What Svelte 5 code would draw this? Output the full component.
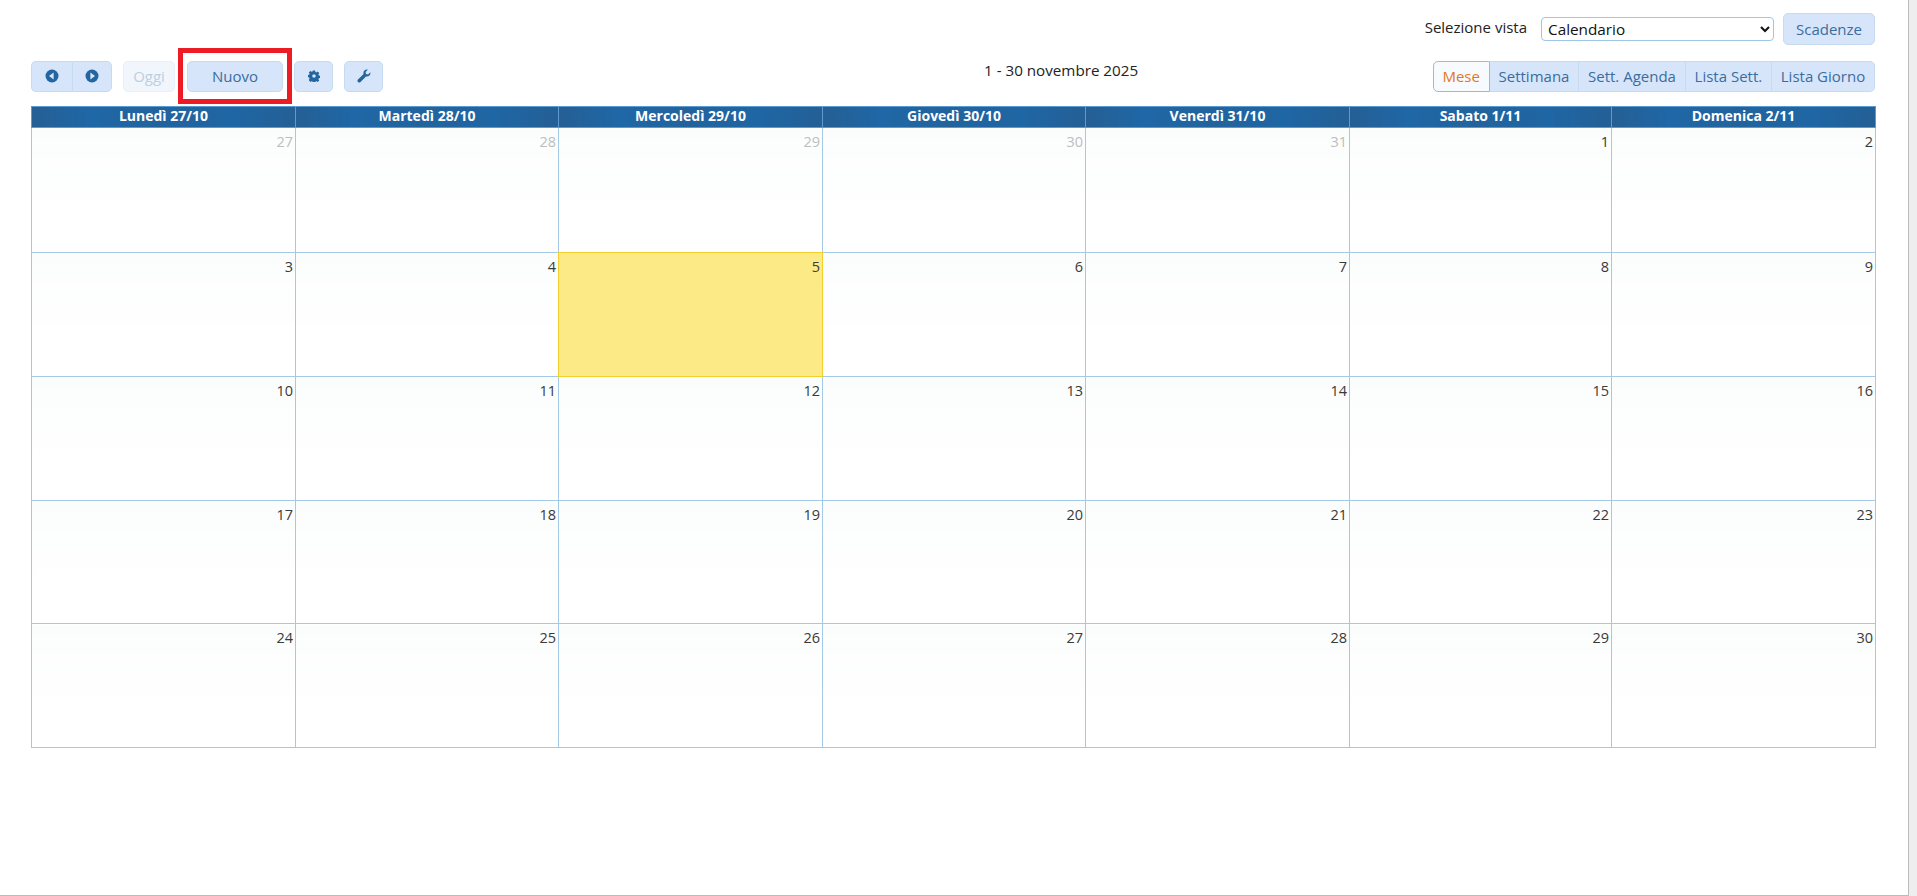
<script>
    const headers = ["Lunedì 27/10", "Martedì 28/10", "Mercoledì 29/10", "Giovedì 30/10", "Venerdì 31/10", "Sabato 1/11", "Domenica 2/11"];
    const colWidths = [264, 263, 264, 263, 264, 262, 264];
    const views = ["Mese", "Settimana", "Sett. Agenda", "Lista Sett.", "Lista Giorno"];

    // first row starts in october, the 1st is on saturday
    const weeks = [];
    let day = -4;
    for (let w = 0; w < 5; w++) {
        const row = [];
        for (let d = 0; d < 7; d++) {
            row.push(day < 1 ? { n: 31 + day, old: true } : { n: day, old: false });
            day++;
        }
        weeks.push(row);
    }
    const today = 5;
</script>

<div class="page">
    <div class="topbar">
        <span class="viewLabel">Selezione vista</span>
        <select class="viewSelect">
            <option>Calendario</option>
        </select>
        <button class="btn scadenze">Scadenze</button>
    </div>

    <div class="toolbar">
        <div class="group">
            <button class="btn nav first" aria-label="Precedente">
                <svg width="14" height="14" viewBox="0 0 14 14"><circle cx="7" cy="7" r="6.5" fill="#22659f" /><path d="M8.6 3.6v6.8L4 7z" fill="#d7e5fb" /></svg>
            </button>
            <button class="btn nav last" aria-label="Successivo">
                <svg width="14" height="14" viewBox="0 0 14 14"><circle cx="7" cy="7" r="6.5" fill="#22659f" /><path d="M5.4 3.6v6.8L10 7z" fill="#d7e5fb" /></svg>
            </button>
        </div>
        <button class="btn oggi">Oggi</button>
        <div class="highlight">
            <button class="btn nuovo">Nuovo</button>
        </div>
        <button class="btn tool gear" aria-label="Impostazioni">
            <svg width="12" height="12" viewBox="0 0 12 12"><path fill="#22659f" fill-rule="evenodd" d="M4.9.5h2.2l.3 1.5 1 .4 1.3-.8 1.5 1.5-.8 1.3.4 1 1.5.3v2.2l-1.5.3-.4 1 .8 1.3-1.5 1.5-1.3-.8-1 .4-.3 1.5H4.900l-.3-1.500-1-.4-1.300.8L.8 9.900l.8-1.300-.4-1-1.500-.3V5.100l1.500-.3.4-1-.8-1.300L2.300 1l1.300.8 1-.4zM6 4.200a1.800 1.800 0 1 0 0 3.600 1.800 1.800 0 0 0 0-3.600z" /></svg>
        </button>
        <button class="btn tool" aria-label="Strumenti">
            <svg width="14" height="14" viewBox="0 0 14 14"><path fill="#22659f" d="M13.300 3.200c.3 1.300 0 2.500-.9 3.400-.9.900-2.200 1.200-3.400.8L3.500 13c-.7.700-1.800.7-2.500 0s-.7-1.800 0-2.500L6.600 5c-.4-1.200-.1-2.500.8-3.400C8.300.700 9.500.400 10.800.700L8.600 2.900l.4 2.100 2.100.4z" /></svg>
        </button>
        <div class="title">1 - 30 novembre 2025</div>
        <div class="views">
            {#each views as v, i}
                <button class="btn view" class:active={i === 0}>{v}</button>
            {/each}
        </div>
    </div>

    <table class="calendar">
        <colgroup>
            {#each colWidths as w}
                <col style="width: {w}px" />
            {/each}
        </colgroup>
        <thead>
            <tr>
                {#each headers as h}
                    <th>{h}</th>
                {/each}
            </tr>
        </thead>
        <tbody>
            {#each weeks as week}
                <tr>
                    {#each week as cell}
                        <td class:today={!cell.old && cell.n === today}>
                            <div class="dayNum" class:old={cell.old}>{cell.n}</div>
                        </td>
                    {/each}
                </tr>
            {/each}
        </tbody>
    </table>
</div>

<style>
    :global(body) {
        background: #eeeeee;
        font-family: "Open Sans", sans-serif;
        font-size: 15px;
    }

    .page {
        box-sizing: border-box;
        width: 1909px;
        height: 896px;
        padding: 13px 33px 0 31px;
        background: #fff;
        border-right: 1px solid #bbbbbb;
        border-bottom: 1px solid #bbbbbb;
    }

    .topbar {
        display: flex;
        justify-content: flex-end;
        align-items: center;
        height: 32px;
        margin-bottom: 3px;
    }

    .viewLabel {
        color: #222;
        font-size: 15px;
        margin: -4px 14px 0 0;
    }

    .viewSelect {
        box-sizing: border-box;
        width: 233px;
        height: 24px;
        margin-right: 9px;
        padding: 0 2px;
        background: #fff;
        border: 1px solid #9fc6e4;
        border-radius: 4px;
        color: #111;
        font-family: inherit;
        font-size: 15.3px;
    }

    .btn {
        box-sizing: border-box;
        background: #d7e5fb;
        border: 1px solid #c6daf0;
        border-radius: 5px;
        color: #3b6d9c;
        font-family: inherit;
        font-size: 15px;
        padding: 0;
        cursor: pointer;
    }

    .scadenze {
        width: 92px;
        height: 32px;
    }

    .toolbar {
        display: flex;
        align-items: center;
        height: 56px;
    }

    .group {
        display: flex;
        margin-right: 11px;
    }

    .nav {
        display: flex;
        align-items: center;
        justify-content: center;
        width: 41px;
        height: 31px;
    }

    .nav.first {
        border-radius: 5px 0 0 5px;
        border-right: 0;
    }

    .nav.last {
        width: 40px;
        border-radius: 0 5px 5px 0;
    }

    .oggi {
        width: 52px;
        height: 31px;
        margin-right: 3px;
        background: #f1f6fd;
        border-color: #e8f0fa;
        color: #bccfe2;
    }

    .highlight {
        box-sizing: border-box;
        display: flex;
        align-items: center;
        justify-content: center;
        width: 114px;
        height: 56px;
        border: 5px solid #ed1c24;
    }

    .nuovo {
        width: 96px;
        height: 31px;
    }

    .tool {
        display: flex;
        align-items: center;
        justify-content: center;
        width: 39px;
        height: 31px;
        margin-left: 11px;
    }

    .gear {
        margin-left: 2px;
    }

    .title {
        flex: 1;
        margin: -13px 0 0 601px;
        color: #222;
        font-size: 15.2px;
    }

    .views {
        display: flex;
    }

    .view {
        height: 31px;
        padding: 0 8.8px;
        border-left-width: 0;
        border-radius: 0;
    }

    .view:last-child {
        border-radius: 0 5px 5px 0;
    }

    .view.active {
        border-left-width: 1px;
        border-color: #8cc0e8;
        border-radius: 5px 0 0 5px;
        background: #f8fbfe;
        color: #e0781e;
    }

    .calendar {
        width: 1844px;
        margin-top: 2px;
        border-collapse: collapse;
        table-layout: fixed;
    }

    th {
        height: 18px;
        padding: 0 0 2px;
        background: linear-gradient(90deg, #255f94, #1f67a6 22%, #22639c 48%, #1f66a4 76%, #245f95);
        border: 1px solid #5b9bd1;
        color: #fff;
        font-size: 14px;
        font-weight: 700;
        line-height: 18px;
    }

    td {
        height: 123px;
        padding: 0;
        vertical-align: top;
        background: linear-gradient(180deg, #fbfdfc, #ffffff 70%);
        border: 1px solid #a3c9e6;
    }

    tbody tr:first-child td {
        height: 124px;
    }

    tbody tr:nth-child(4) td {
        height: 122px;
    }

    td.today {
        background: #fbea85;
        /* double wins the collapsed border conflict with the neighbours */
        border: 1px double #f5cf2e;
    }

    .dayNum {
        padding: 4px 2px 0 0;
        color: #3a3a3a;
        font-size: 14.5px;
        line-height: 19px;
        text-align: right;
    }

    .dayNum.old {
        color: #bdbdbd;
    }
</style>
